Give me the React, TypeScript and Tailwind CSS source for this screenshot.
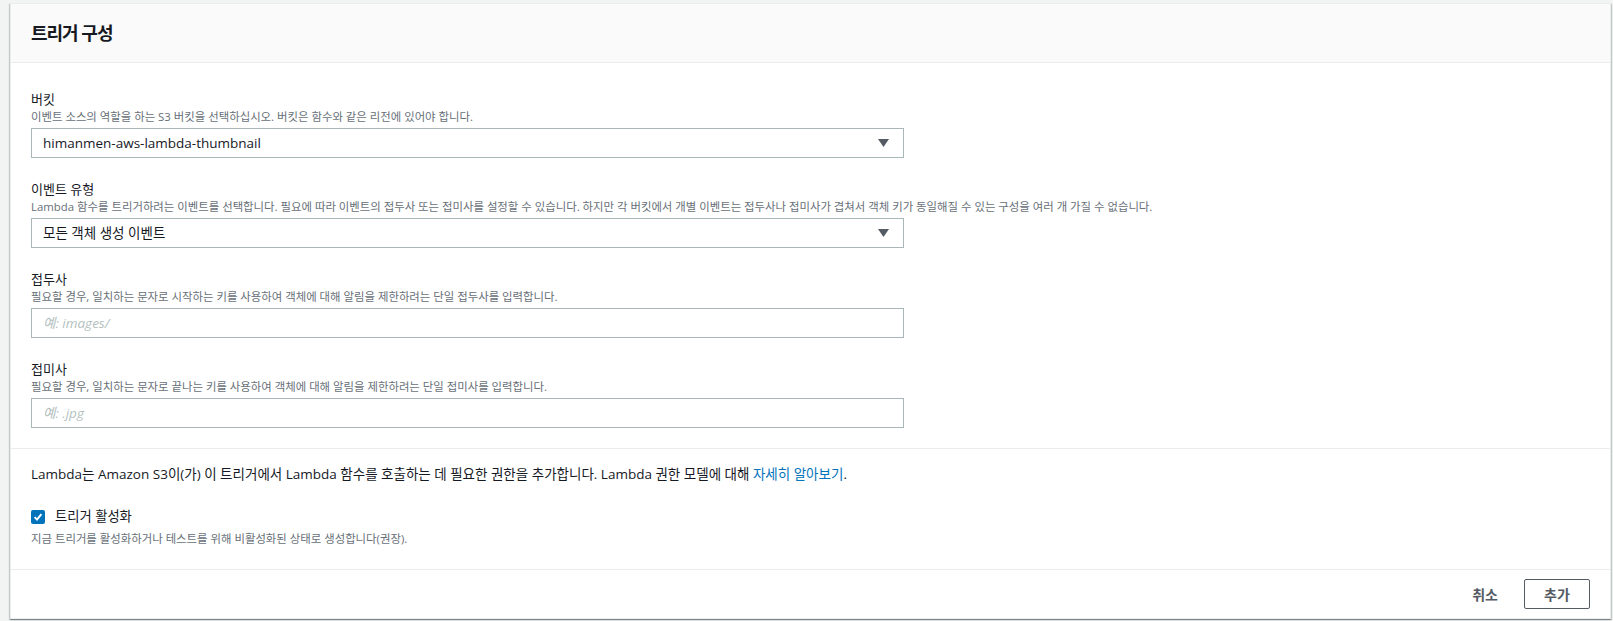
import { useState } from 'react';

const font = { fontFamily: '"Open Sans", "Noto Sans CJK KR", sans-serif' };

function Arrow() {
  return (
    <svg width="11" height="8" viewBox="0 0 11 8" className="shrink-0">
      <path d="M0 0 H11 L5.5 8 Z" fill="#545b64" />
    </svg>
  );
}

function Field({
  label,
  help,
  children,
}: {
  label: string;
  help: string;
  children: React.ReactNode;
}) {
  return (
    <div className="flex flex-col">
      <div className="pt-[1px] text-[13px] leading-[20px] text-[#16191f]">{label}</div>
      <div className="text-[11.4px] leading-[16px] text-[#687078]">{help}</div>
      <div className="mt-[3px] w-[873px]">{children}</div>
    </div>
  );
}

function SelectBox({ value }: { value: string }) {
  return (
    <div className="flex h-[30px] items-center justify-between border border-[#aab7b8] bg-white pl-[11px] pr-[14px]">
      <span className="text-[13.5px] text-[#16191f]">{value}</span>
      <Arrow />
    </div>
  );
}

function TextBox({ placeholder }: { placeholder: string }) {
  return (
    <input
      type="text"
      placeholder={placeholder}
      className="block h-[30px] w-full border border-[#aab7b8] bg-white px-[11px] text-[13.5px] text-[#16191f] outline-none placeholder:italic placeholder:text-[#b4bfc0]"
      style={font}
    />
  );
}

export default function App() {
  const [enabled, setEnabled] = useState(true);

  return (
    <div className="min-h-[621px] bg-[#f2f3f3] pt-[3px] pl-[10px] pr-[2px]" style={font}>
      <section className="flex h-[616px] flex-col border border-[#eaeded] bg-white shadow-[0_1px_1px_0_rgba(0,28,36,0.3),1px_1px_1px_0_rgba(0,28,36,0.15),-1px_1px_1px_0_rgba(0,28,36,0.15)]">
        <header className="flex h-[59px] items-center border-b border-[#eaeded] bg-[#fafafa] px-[20px]">
          <h2 className="text-[18px] font-bold tracking-[-1px] text-[#16191f]">트리거 구성</h2>
        </header>

        <div className="flex flex-col gap-[20px] border-b border-[#eaeded] px-[20px] pt-[25px] pb-[20px]">
          <Field label="버킷" help="이벤트 소스의 역할을 하는 S3 버킷을 선택하십시오. 버킷은 함수와 같은 리전에 있어야 합니다.">
            <SelectBox value="himanmen-aws-lambda-thumbnail" />
          </Field>
          <Field
            label="이벤트 유형"
            help="Lambda 함수를 트리거하려는 이벤트를 선택합니다. 필요에 따라 이벤트의 접두사 또는 접미사를 설정할 수 있습니다. 하지만 각 버킷에서 개별 이벤트는 접두사나 접미사가 겹쳐서 객체 키가 동일해질 수 있는 구성을 여러 개 가질 수 없습니다."
          >
            <SelectBox value="모든 객체 생성 이벤트" />
          </Field>
          <Field label="접두사" help="필요할 경우, 일치하는 문자로 시작하는 키를 사용하여 객체에 대해 알림을 제한하려는 단일 접두사를 입력합니다.">
            <TextBox placeholder="예: images/" />
          </Field>
          <Field label="접미사" help="필요할 경우, 일치하는 문자로 끝나는 키를 사용하여 객체에 대해 알림을 제한하려는 단일 접미사를 입력합니다.">
            <TextBox placeholder="예: .jpg" />
          </Field>
        </div>

        <div className="flex flex-col border-b border-[#eaeded] px-[20px] pt-[15px] pb-[22px]">
          <p className="text-[13.5px] leading-[20px] text-[#16191f]">
            Lambda는 Amazon S3이(가) 이 트리거에서 Lambda 함수를 호출하는 데 필요한 권한을 추가합니다. Lambda 권한 모델에 대해{' '}
            <a className="text-[#0073bb]">자세히 알아보기</a>.
          </p>
          <label className="mt-[23px] flex h-[20px] cursor-pointer items-center gap-[10px]">
            <button
              type="button"
              onClick={() => setEnabled(!enabled)}
              className={
                enabled
                  ? 'flex h-[14px] w-[14px] items-center justify-center rounded-[2px] bg-[#0073bb]'
                  : 'flex h-[14px] w-[14px] items-center justify-center rounded-[2px] border border-[#aab7b8] bg-white'
              }
            >
              {enabled && (
                <svg width="10" height="10" viewBox="0 0 10 10">
                  <path d="M1.6 5.2 L4 7.6 L8.4 2.2" stroke="white" strokeWidth="1.9" fill="none" />
                </svg>
              )}
            </button>
            <span className="text-[13.3px] text-[#16191f]">트리거 활성화</span>
          </label>
          <div className="mt-[4px] text-[11.4px] leading-[16px] text-[#687078]">
            지금 트리거를 활성화하거나 테스트를 위해 비활성화된 상태로 생성합니다(권장).
          </div>
        </div>

        <footer className="flex flex-1 items-center justify-end gap-[6px] px-[20px]">
          <button type="button" className="h-[30px] px-[20px] text-[14px] font-bold text-[#545b64]">
            취소
          </button>
          <button
            type="button"
            className="h-[30px] w-[66px] rounded-[2px] border border-[#545b64] text-[14px] font-bold text-[#545b64]"
          >
            추가
          </button>
        </footer>
      </section>
    </div>
  );
}
